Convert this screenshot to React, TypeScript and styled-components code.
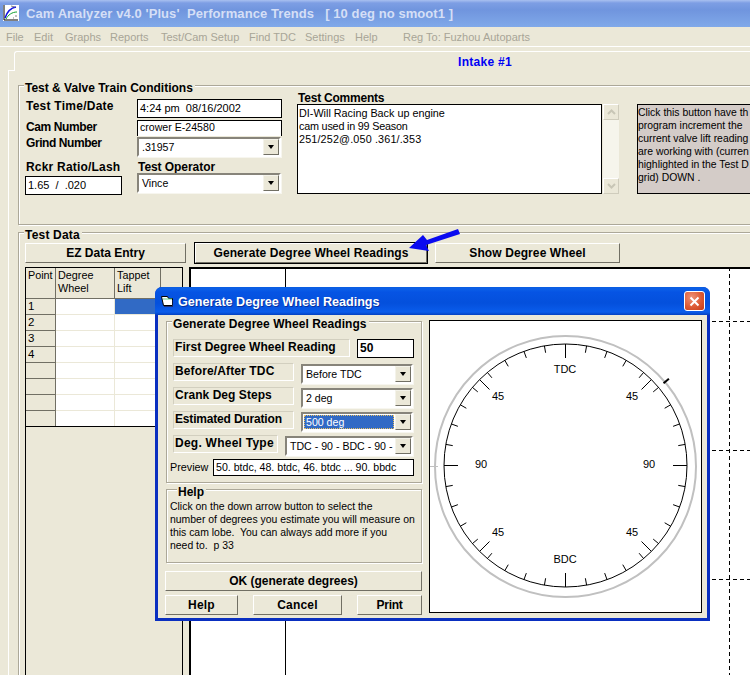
import React from "react";
import styled, { createGlobalStyle } from "styled-components";

const Global = createGlobalStyle`
  html, body { margin: 0; padding: 0; background: #ebe8d8; }
  * { box-sizing: border-box; }
  body { font-family: "Liberation Sans", Arial, sans-serif; font-size: 11px; color: #000; }
`;

const Page = styled.div`
  position: relative; width: 750px; height: 675px; overflow: hidden; background: #ebe8d8;
`;
const TitleBar = styled.div`
  height: 27px; display: flex; align-items: center; padding: 0 0 1px 3px; gap: 7px;
  background: linear-gradient(180deg, #a9c0f0 0, #7d9ee4 3px, #7095de 10px, #80a9e9 27px);
`;
const TitleText = styled.span`
  font-size: 13px; font-weight: 700; color: #d5dff6; white-space: pre; letter-spacing: .08px;
`;
const MenuBar = styled.div`
  height: 20px; border-bottom: 1px solid #fff; display: flex; align-items: center;
  padding: 1px 0 0 6px; color: #a8a597; font-size: 11px;
`;
const MenuItem = styled.span<{ $w: number }>` width: ${p => p.$w}px; white-space: pre; `;

const TabHead = styled.div`
  position: relative; margin: 4px 0 0 14px; height: 20px; border-top: 1px solid #fff; border-left: 1px solid #fff;
  border-top-left-radius: 3px; text-align: left; padding: 3px 0 0 443px;
  color: #0000f5; font-size: 12px; font-weight: 700; letter-spacing: .3px;
  &::before { content: ""; position: absolute; left: -7px; bottom: 0; width: 6px; height: 1px; background: #fff; }
`;
const TabBody = styled.div`
  margin-left: 8px; border-left: 1px solid #fff; padding: 14px 0 0 9px; height: 604px;
`;
const Group = styled.div<{ $w: number; $h: number; $mt?: number }>`
  width: ${p => p.$w}px; height: ${p => p.$h}px; margin-top: ${p => p.$mt ?? 0}px;
  border: 1px solid #aca899; box-shadow: inset 1px 1px 0 #fff, 1px 1px 0 #fff;
`;
const Legend = styled.div<{ $ml?: number; $ls?: number }>`
  width: fit-content; margin: -4px 0 0 ${p => p.$ml ?? 5}px; padding: 0 2px 0 1px; height: 13px; line-height: 13px;
  background: #ebe8d8; font-weight: 700; font-size: 12px; letter-spacing: ${p => p.$ls ?? 0}px; white-space: pre;
`;
const Conditions = styled.div` display: flex; margin-top: -9px; `;
const LeftGrid = styled.div`
  display: grid; grid-template-columns: 112px 145px; grid-template-rows: 20px 16px 20px 13px 22px;
  row-gap: 1px; padding: 13px 0 0 6px; height: 135px;
`;
const BoldLabel = styled.div<{ $mt?: number; $ml?: number; $ls?: number }>`
  font-weight: 700; font-size: 12px; letter-spacing: ${p => p.$ls ?? 0.08}px; line-height: 13px; white-space: pre;
  margin: ${p => p.$mt ?? 0}px 0 0 ${p => p.$ml ?? 1}px;
`;
const TextField = styled.div<{ $w?: number; $h?: number; $mt?: number; $bold?: boolean; $open?: boolean; $fs?: number }>`
  width: ${p => (p.$w ? p.$w + "px" : "100%")}; height: ${p => p.$h ?? 19}px; margin-top: ${p => p.$mt ?? 0}px;
  border: 1px solid #000; background: #fff; padding: 0 0 0 2px; line-height: ${p => (p.$h ?? 19) - 3}px;
  font-size: ${p => (p.$bold ? 12 : p.$fs ?? 11)}px; font-weight: ${p => (p.$bold ? 700 : 400)}; white-space: pre; overflow: hidden; flex: none;
  ${p => (p.$open ? "border-bottom: none;" : "")}
`;
const SelectBox = styled.div<{ $w?: number; $mt?: number }>`
  width: ${p => (p.$w ? p.$w + "px" : "144px")}; height: 20px; margin-top: ${p => p.$mt ?? 0}px; flex: none;
  border: 2px solid; border-color: #87847a #fff #fff #87847a; background: #fff;
  display: flex; align-items: stretch; box-shadow: 1px 1px 0 #f7f6ef;
`;
const SelectValue = styled.div<{ $active?: boolean }>`
  flex: 1; margin: 1px; padding-left: 2px; line-height: 14px; font-size: 10.6px; white-space: pre; overflow: hidden;
  ${p => (p.$active ? "background: #316ac5; color: #fff; outline: 1px dotted #e8c060; outline-offset: -1px;" : "")}
`;
const DropButton = styled.div`
  width: 16px; flex: none; background: #ebe8d8; border: 1px solid; border-color: #f4f3ea #716f64 #716f64 #f4f3ea;
  display: flex; align-items: center; justify-content: center;
  &::after { content: ""; border: 3.5px solid transparent; border-top: 4px solid #000; border-bottom: 0; }
`;
const CommentsCol = styled.div` width: 340px; padding: 6px 0 0 16px; flex: none; `;
const CommentsRow = styled.div` display: flex; gap: 1px; margin: -1px 0 0 -1px; `;
const CommentBox = styled.div`
  width: 305px; height: 90px; border: 1px solid #000; background: #fff; padding: 2px 0 0 1px;
  font-size: 10.8px; line-height: 13px; white-space: pre;
`;
const CommentLine = styled.div<{ $ls: number }>` letter-spacing: ${p => p.$ls}px; `;
const Scroll = styled.div`
  width: 16px; height: 90px; background: #f6f5ec; display: flex; flex-direction: column; justify-content: space-between;
`;
const ScrollBtn = styled.div`
  height: 16px; background: #ebe8d8; border: 1px solid; border-color: #fff #cfccbc #cfccbc #fff;
  display: flex; align-items: center; justify-content: center;
`;
const InfoBox = styled.div`
  width: 160px; height: 90px; margin: 18px 0 0 15px; flex: none; border: 1px solid #000; background: #d4ccc8;
  padding: 1px 0 0 0; font-size: 10.4px; line-height: 13px; white-space: pre;
`;
const DataInner = styled.div` padding: 0 0 0 6px; `;
const ButtonRow = styled.div` display: flex; margin-top: 1px; height: 20px; `;
const Btn = styled.div<{ $w: number; $ml?: number; $def?: boolean; $ls?: number }>`
  width: ${p => p.$w}px; margin-left: ${p => p.$ml ?? 0}px; height: 20px; flex: none;
  background: #ebe8d8; border: 1px solid; border-color: #fff #716f64 #716f64 #fff;
  font-weight: 700; font-size: 12px; letter-spacing: ${p => p.$ls ?? 0.1}px; display: flex; align-items: center; justify-content: center; white-space: pre;
  ${p => (p.$def ? "outline: 1px solid #000;" : "")}
`;
const DataRow = styled.div` display: flex; margin-top: 4px; gap: 6px; align-items: flex-start; `;
const Sheet = styled.div` width: 158px; height: 420px; border: 1px solid #000; border-bottom: 0; flex: none; `;
const SheetHead = styled.div`
  display: grid; grid-template-columns: 30px 59px 46px 22px; height: 31px; border-bottom: 1px solid #716f64;
`;
const HeadCell = styled.div<{ $last?: boolean }>`
  border-right: 1px solid ${p => (p.$last ? "transparent" : "#716f64")}; padding: 1px 0 0 2px;
  font-size: 10.8px; line-height: 13px; white-space: pre;
`;
const SheetRow = styled.div` display: grid; grid-template-columns: 30px 59px 46px 22px; height: 16px; `;
const PointCell = styled.div`
  border-right: 1px solid #716f64; border-bottom: 1px solid #716f64; padding-left: 2px; font-size: 11.5px; line-height: 15px;
`;
const DataCell = styled.div<{ $sel?: boolean }>`
  background: ${p => (p.$sel ? "#316ac5" : "#fff")}; border-right: 1px solid #ebe8d8; border-bottom: 1px solid #ebe8d8;
`;
const SheetEnd = styled.div` height: 1px; margin-top: -1px; background: #000; position: relative; `;
const ChartSvg = styled.svg` display: block; flex: none; `;

const Dialog = styled.div`
  position: absolute; left: 155px; top: 287px; width: 555px; height: 334px;
  background: #0a2fc0; border-radius: 7px 7px 0 0; padding: 0 3px 3px; display: flex; flex-direction: column;
`;
const DialogTitle = styled.div`
  height: 28px; margin: 0 -3px; padding: 0 5px 0 6px; display: flex; align-items: center; gap: 5px; border-radius: 7px 7px 0 0;
  background: linear-gradient(180deg, #0a5de0 0, #0b5fe8 2px, #0654e4 5px, #0450dc 16px, #0a5ceb 25px, #0340c0 28px);
`;
const DialogTitleText = styled.span`
  flex: 1; color: #fff; font-size: 12.6px; font-weight: 700; white-space: pre; text-shadow: 1px 1px 0 #0a2f9e; padding-top: 1px;
`;
const CloseBtn = styled.div`
  width: 21px; height: 20px; border: 1px solid #fff; border-radius: 3px;
  background: radial-gradient(circle at 35% 30%, #ee9277 0, #dd5a34 55%, #c53a18 100%);
  display: flex; align-items: center; justify-content: center;
`;
const DialogBody = styled.div`
  flex: 1; background: #ebe8d8; padding: 5px 0 0 7px; display: flex; gap: 7px; align-items: flex-start;
`;
const DialogLeft = styled.div` width: 257px; flex: none; padding-top: 1px; `;
const DialogGroup = styled(Group)` margin-left: 1px; `;
const FieldRow = styled.div<{ $mt?: number }>`
  display: flex; gap: 7px; height: 24px; padding-left: 6px; margin-top: ${p => p.$mt ?? 0}px; align-items: flex-start;
`;
const InsetLabel = styled.div<{ $w: number; $ls?: number }>`
  width: ${p => p.$w}px; height: 18px; flex: none; border: 1px solid; border-color: #d2cfbf #fff #fff #d2cfbf;
  padding: 0 0 0 1px; font-weight: 700; font-size: 12px; letter-spacing: ${p => p.$ls ?? 0.08}px; line-height: 14px; white-space: pre;
`;
const PreviewRow = styled.div` display: flex; align-items: center; padding-left: 3px; gap: 5px; `;
const PlainLabel = styled.span` font-size: 10.8px; width: 38px; flex: none; margin-top: -2px; `;
const HelpText = styled.div`
  padding: 0 0 0 3px; font-size: 10.45px; line-height: 13px; white-space: pre; margin-top: 1px;
`;
const ActionRow = styled.div` display: flex; justify-content: space-between; margin-top: 4px; `;
const OkRow = styled.div` margin-top: 8px; `;
const DialPanel = styled.svg` display: block; flex: none; border: 1px solid #000; background: #fff; `;
const Arrow = styled.svg` position: absolute; left: 400px; top: 222px; `;

const menu: [string, number][] = [
  ["File", 28], ["Edit", 31], ["Graphs", 45], ["Reports", 51], ["Test/Cam Setup", 88], ["Find TDC", 56],
  ["Settings", 50], ["Help", 48], ["Reg To: Fuzhou Autoparts", 170],
];

const AppIcon = () => (
  <svg width="16" height="18" viewBox="0 0 16 18">
    <rect x="0" y="1" width="16" height="16" fill="#fff" />
    <path d="M1 1v15h14" fill="none" stroke="#000" strokeWidth="1" />
    <path d="M2 14C4 8 7 4 13 3" fill="none" stroke="#1010e0" strokeWidth="1.5" />
    <path d="M3 15C5 11 9 8 14 8" fill="none" stroke="#10a030" strokeWidth="1" />
    <path d="M8 2l4 1M12 12h2M10 14h1" stroke="#808080" strokeWidth="1" />
  </svg>
);
const DialogIcon = () => (
  <svg width="12" height="12" viewBox="0 0 12 12">
    <path d="M0.5 1.5h6l1 2h4v7h-9z" fill="#fff" stroke="#000" />
    <path d="M2 4h9" stroke="#6c8" strokeWidth="1" />
    <path d="M3 11.5h9V5" stroke="#203070" fill="none" />
  </svg>
);
const Chevron = ({ up }: { up?: boolean }) => (
  <svg width="9" height="6" viewBox="0 0 9 6">
    <path d={up ? "M1 5l3.5-3.5L8 5" : "M1 1l3.5 3.5L8 1"} fill="none" stroke="#c8c6b6" strokeWidth="2" />
  </svg>
);

const Select = ({ value, w, mt, active }: { value: string; w?: number; mt?: number; active?: boolean }) => (
  <SelectBox $w={w} $mt={mt}>
    <SelectValue $active={active}>{value}</SelectValue>
    <DropButton />
  </SelectBox>
);

const Dial = () => {
  const cx = 135.5, cy = 144.5, r = 121.5;
  const pt = (deg: number, rad: number) => {
    const a = (deg * Math.PI) / 180;
    return [cx + rad * Math.sin(a), cy - rad * Math.cos(a)];
  };
  const ticks: React.ReactNode[] = [];
  const seen = new Set<number>();
  const add = (deg: number, len: number) => {
    const [x1, y1] = pt(deg, r);
    const [x2, y2] = pt(deg, r - len);
    ticks.push(<line key={deg} x1={x1} y1={y1} x2={x2} y2={y2} stroke="#000" strokeWidth="1" />);
    seen.add(deg);
  };
  [0, 45, 90, 135, 180, 225, 270, 315].forEach(d => add(d, 14));
  for (let d = 0; d < 360; d += 10) if (!seen.has(d)) add(d, 7);
  const [mx1, my1] = pt(50, 128);
  const [mx2, my2] = pt(50, 135);
  const label = { fontFamily: "'Liberation Sans', sans-serif", fontSize: 11, textAnchor: "middle" as const };
  const texts: [string, number, number][] = [
    ["TDC", 135, 52], ["BDC", 135, 242], ["45", 68, 79], ["45", 202, 79], ["45", 68, 215], ["45", 202, 215], ["90", 51, 147], ["90", 219, 147],
  ];
  return (
    <DialPanel width={273} height={293} viewBox="0 0 271 291">
      <circle cx={cx} cy={cy + 1} r={130.5} fill="none" stroke="#c0c0c0" strokeWidth="2" />
      <line x1="0" y1={cy + 1} x2="8" y2={cy + 1} stroke="#c0c0c0" />
      <circle cx={cx} cy={cy} r={r} fill="none" stroke="#000" strokeWidth="1" />
      {ticks}
      <line x1={mx1} y1={my1} x2={mx2} y2={my2} stroke="#000" strokeWidth="2" />
      {texts.map(([t, x, y], i) => <text key={i} x={x} y={y} {...label}>{t}</text>)}
    </DialPanel>
  );
};

export default function App() {
  return (
    <Page>
      <Global />
      <TitleBar>
        <AppIcon />
        <TitleText>{"Cam Analyzer v4.0 'Plus'  Performance Trends   [ 10 deg no smoot1 ]"}</TitleText>
      </TitleBar>
      <MenuBar>
        {menu.map(([t, w]) => <MenuItem key={t} $w={w}>{t}</MenuItem>)}
      </MenuBar>
      <TabHead>Intake #1</TabHead>
      <TabBody>
        <Group $w={760} $h={140}>
          <Legend>Test &amp; Valve Train Conditions</Legend>
          <Conditions>
            <LeftGrid>
              <BoldLabel $mt={1} $ls={0.25}>Test Time/Date</BoldLabel>
              <TextField $w={145}>{"4:24 pm  08/16/2002"}</TextField>
              <BoldLabel $mt={1} $ls={-0.38}>Cam Number</BoldLabel>
              <TextField $w={145} $h={16} $open $fs={10.6}>crower E-24580</TextField>
              <BoldLabel $ls={-0.43}>Grind Number</BoldLabel>
              <Select value=".31957" />
              <BoldLabel $mt={3} $ls={0.2}>Rckr Ratio/Lash</BoldLabel>
              <BoldLabel $mt={3} $ls={-0.06}>Test Operator</BoldLabel>
              <TextField $w={97} $mt={4}>{"1.65  /  .020"}</TextField>
              <Select value="Vince" mt={1} />
            </LeftGrid>
            <CommentsCol>
              <BoldLabel $ml={0} $ls={-0.22}>Test Comments</BoldLabel>
              <CommentsRow>
                <CommentBox>
                  <CommentLine $ls={0}>DI-Will Racing Back up engine</CommentLine>
                  <CommentLine $ls={-0.2}>cam used in 99 Season</CommentLine>
                  <CommentLine $ls={0.15}>251/252@.050 .361/.353</CommentLine>
                </CommentBox>
                <Scroll>
                  <ScrollBtn><Chevron up /></ScrollBtn>
                  <ScrollBtn><Chevron /></ScrollBtn>
                </Scroll>
              </CommentsRow>
            </CommentsCol>
            <InfoBox>{"Click this button have th\nprogram increment the\ncurrent valve lift reading\nare working with (curren\nhighlighted in the Test D\ngrid) DOWN ."}</InfoBox>
          </Conditions>
        </Group>
        <Group $w={760} $h={460} $mt={7}>
          <Legend $ls={0.2}>Test Data</Legend>
          <DataInner>
            <ButtonRow>
              <Btn $w={161} $ls={0}>EZ Data Entry</Btn>
              <Btn $w={232} $ml={9} $def>Generate Degree Wheel Readings</Btn>
              <Btn $w={185} $ml={8}>Show Degree Wheel</Btn>
            </ButtonRow>
            <DataRow>
              <Sheet>
                <SheetHead>
                  <HeadCell>Point</HeadCell>
                  <HeadCell>{"Degree\nWheel"}</HeadCell>
                  <HeadCell>{"Tappet\nLift"}</HeadCell>
                  <HeadCell $last />
                </SheetHead>
                {["1", "2", "3", "4", "", "", "", ""].map((n, i) => (
                  <SheetRow key={i}>
                    <PointCell>{n}</PointCell>
                    <DataCell />
                    <DataCell $sel={i === 0} />
                    <DataCell />
                  </SheetRow>
                ))}
                <SheetEnd />
              </Sheet>
              <ChartSvg width={565} height={410}>
                <rect x="1" y="1" width="600" height="420" fill="#fff" stroke="#000" strokeWidth="2" />
                <line x1="96.5" y1="0" x2="96.5" y2="410" stroke="#000" />
                <line x1="540.5" y1="0" x2="540.5" y2="410" stroke="#000" strokeDasharray="4 3" />
                {[54.5, 183.5, 312.5].map(y => (
                  <line key={y} x1="96" y1={y} x2="565" y2={y} stroke="#000" strokeDasharray="4 3" />
                ))}
              </ChartSvg>
            </DataRow>
          </DataInner>
        </Group>
      </TabBody>
      <Arrow width="70" height="35" viewBox="0 0 70 35">
        <path d="M58 7 L27 18 L23 13 L9 26 L29 29 L26 23 L60 12 Z" fill="#0a0af0" />
      </Arrow>
      <Dialog>
        <DialogTitle>
          <DialogIcon />
          <DialogTitleText>Generate Degree Wheel Readings</DialogTitleText>
          <CloseBtn>
            <svg width="11" height="11" viewBox="0 0 11 11">
              <path d="M1.5 1.5l8 8M9.5 1.5l-8 8" stroke="#fff" strokeWidth="2" />
            </svg>
          </CloseBtn>
        </DialogTitle>
        <DialogBody>
          <DialogLeft>
            <DialogGroup $w={256} $h={162}>
              <Legend $ls={0.05}>Generate Degree Wheel Readings</Legend>
              <FieldRow $mt={8}>
                <InsetLabel $w={177} $ls={0.05}>First Degree Wheel Reading</InsetLabel>
                <TextField $w={57} $bold>50</TextField>
              </FieldRow>
              <FieldRow>
                <InsetLabel $w={121} $ls={0.13}>Before/After TDC</InsetLabel>
                <Select value="Before TDC" w={112} mt={1} />
              </FieldRow>
              <FieldRow>
                <InsetLabel $w={121} $ls={0.05}>Crank Deg Steps</InsetLabel>
                <Select value="2 deg" w={112} mt={1} />
              </FieldRow>
              <FieldRow>
                <InsetLabel $w={121} $ls={-0.18}>Estimated Duration</InsetLabel>
                <Select value="500 deg" w={112} mt={1} active />
              </FieldRow>
              <FieldRow>
                <InsetLabel $w={105} $ls={0.25}>Deg. Wheel Type</InsetLabel>
                <Select value="TDC - 90 - BDC - 90 -" w={128} mt={1} />
              </FieldRow>
              <PreviewRow>
                <PlainLabel>Preview</PlainLabel>
                <TextField $w={201} $h={17} $fs={10.6}>50. btdc, 48. btdc, 46. btdc ... 90. bbdc</TextField>
              </PreviewRow>
            </DialogGroup>
            <DialogGroup $w={256} $h={74} $mt={6}>
              <Legend $ml={10}>Help</Legend>
              <HelpText>{"Click on the down arrow button to select the\nnumber of degrees you estimate you will measure on\nthis cam lobe.  You can always add more if you\nneed to.  p 33"}</HelpText>
            </DialogGroup>
            <OkRow><Btn $w={257} $ls={0}>OK (generate degrees)</Btn></OkRow>
            <ActionRow>
              <Btn $w={73} $ls={0.2}>Help</Btn>
              <Btn $w={89} $ls={0.2}>Cancel</Btn>
              <Btn $w={65} $ls={-0.3}>Print</Btn>
            </ActionRow>
          </DialogLeft>
          <Dial />
        </DialogBody>
      </Dialog>
    </Page>
  );
}
